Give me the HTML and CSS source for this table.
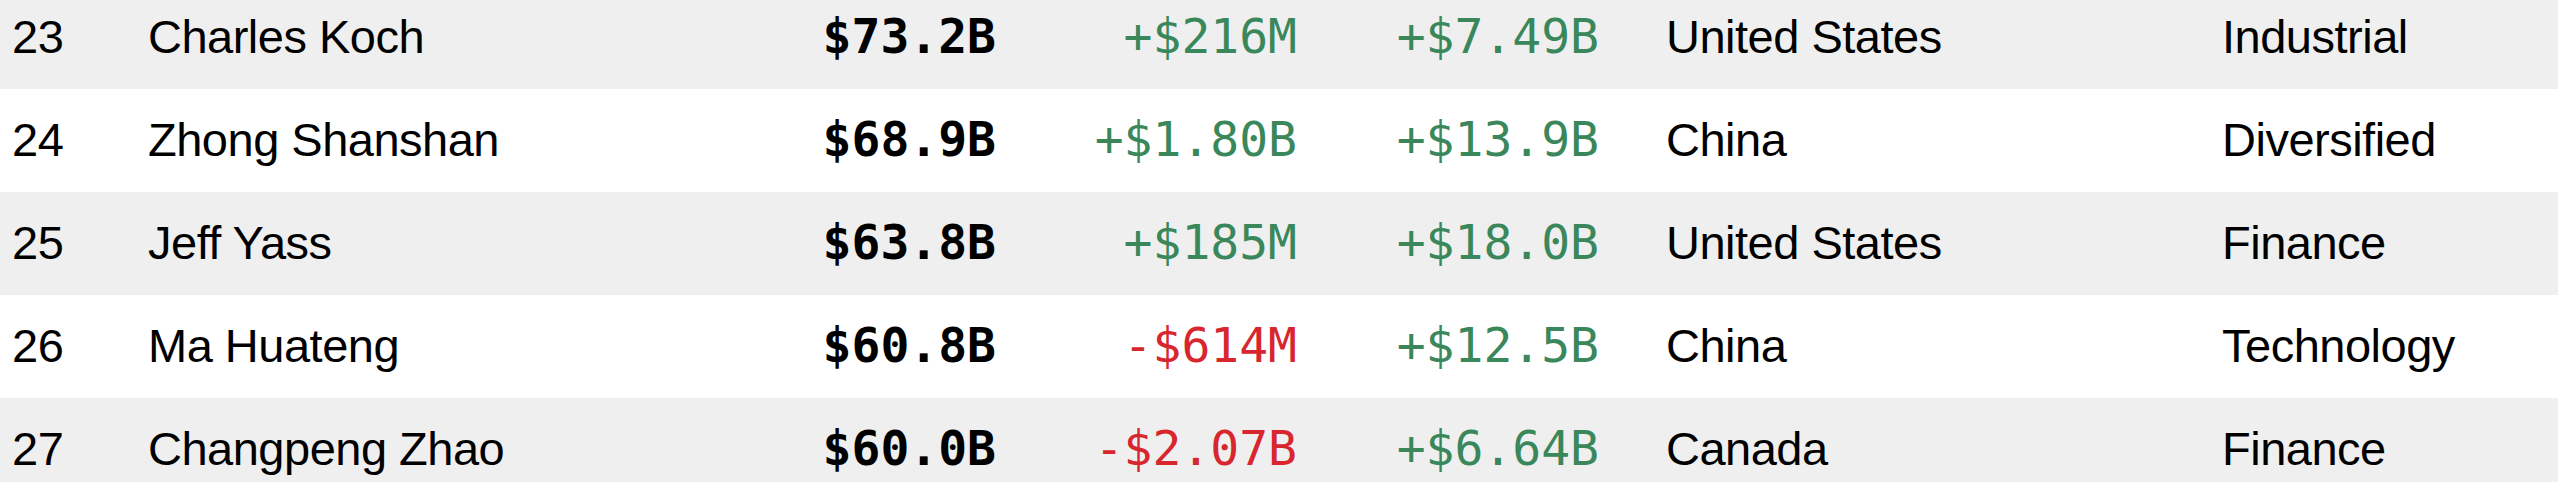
FILE: index.html
```html
<!DOCTYPE html>
<html>
<head>
<meta charset="utf-8">
<link rel="stylesheet" href="styles.css">
</head>
<body>
<div class="table">
  <div class="row alt">
    <div class="rank">23</div><div class="name">Charles Koch</div>
    <div class="num worth">$73.2B</div><div class="num up">+$216M</div><div class="num up">+$7.49B</div>
    <div class="country">United States</div><div class="industry">Industrial</div>
  </div>
  <div class="row">
    <div class="rank">24</div><div class="name">Zhong Shanshan</div>
    <div class="num worth">$68.9B</div><div class="num up">+$1.80B</div><div class="num up">+$13.9B</div>
    <div class="country">China</div><div class="industry">Diversified</div>
  </div>
  <div class="row alt">
    <div class="rank">25</div><div class="name">Jeff Yass</div>
    <div class="num worth">$63.8B</div><div class="num up">+$185M</div><div class="num up">+$18.0B</div>
    <div class="country">United States</div><div class="industry">Finance</div>
  </div>
  <div class="row">
    <div class="rank">26</div><div class="name">Ma Huateng</div>
    <div class="num worth">$60.8B</div><div class="num down">-$614M</div><div class="num up">+$12.5B</div>
    <div class="country">China</div><div class="industry">Technology</div>
  </div>
  <div class="row alt">
    <div class="rank">27</div><div class="name">Changpeng Zhao</div>
    <div class="num worth">$60.0B</div><div class="num down">-$2.07B</div><div class="num up">+$6.64B</div>
    <div class="country">Canada</div><div class="industry">Finance</div>
  </div>
</div>
</body>
</html>
```
FILE: styles.css
```css
html, body {
  margin: 0;
  padding: 0;
  background: #ffffff;
  overflow: hidden;
}
.table {
  margin-top: -14px;
  font-family: "Liberation Sans", Arial, sans-serif;
  font-size: 47px;
  letter-spacing: -0.5px;
  color: #000;
}
.row {
  display: grid;
  grid-template-columns: 136px 600px 250px 301px 302px 621px 1fr;
  align-items: center;
  height: 103px;
  padding-left: 12px;
  padding-bottom: 3px;
  box-sizing: border-box;
  background: #ffffff;
}
.row.alt {
  background: #efefef;
}
.num {
  font-family: "DejaVu Sans Mono", "Liberation Mono", monospace;
  font-size: 48px;
  letter-spacing: 0;
  text-align: right;
  padding-right: 2px;
}
.worth {
  font-weight: bold;
  color: #000;
}
.up {
  color: #3a875b;
}
.down {
  color: #d8262f;
}
.country {
  padding-left: 65px;
}
.industry {
  padding-left: 0;
}
```
